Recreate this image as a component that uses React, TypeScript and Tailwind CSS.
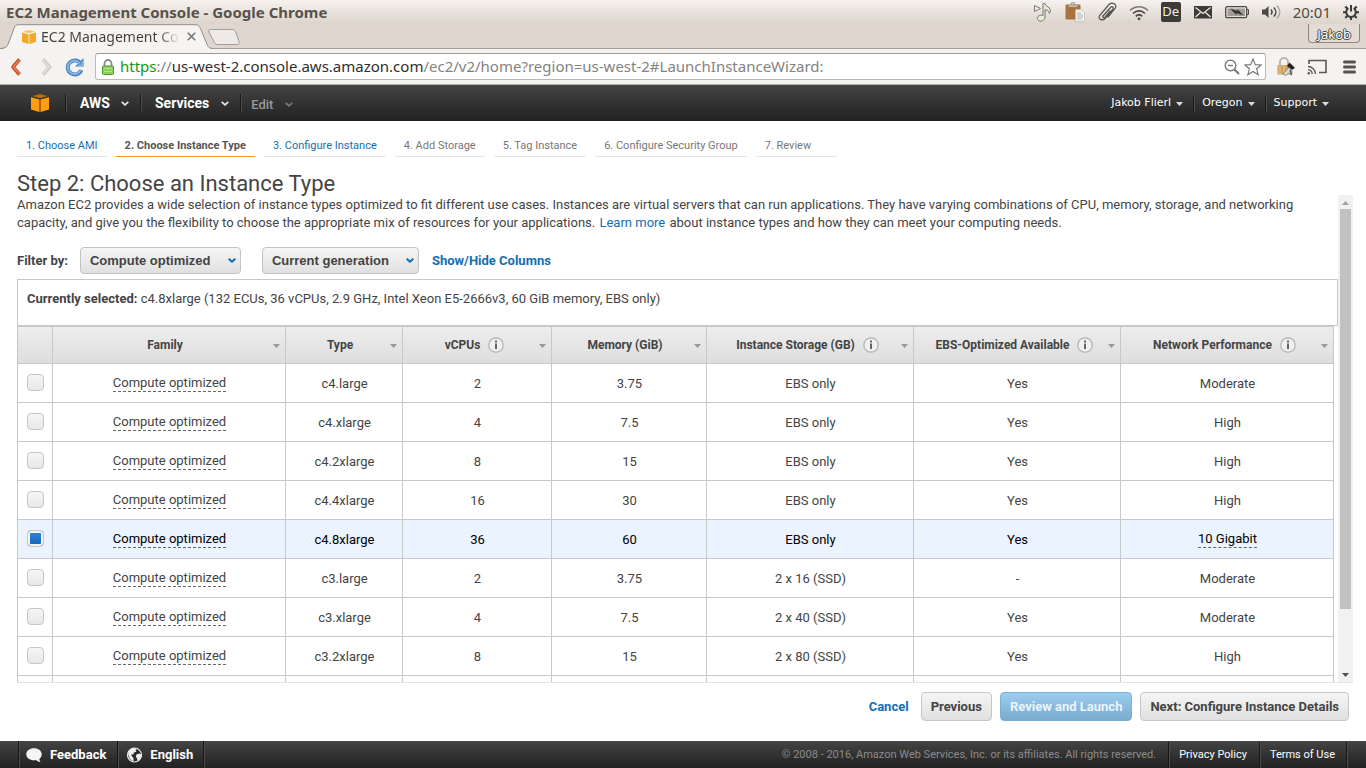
import React, { useState } from "react";

const SYSTEM_FONT = "font-['Noto_Sans','Open_Sans',sans-serif]";

type Row = {
  family: string;
  type: string;
  vcpus: string;
  memory: string;
  storage: string;
  ebs: string;
  network: string;
};

const family = "Compute optimized";
const ROWS: Row[] = [
  { family, type: "c4.large", vcpus: "2", memory: "3.75", storage: "EBS only", ebs: "Yes", network: "Moderate" },
  { family, type: "c4.xlarge", vcpus: "4", memory: "7.5", storage: "EBS only", ebs: "Yes", network: "High" },
  { family, type: "c4.2xlarge", vcpus: "8", memory: "15", storage: "EBS only", ebs: "Yes", network: "High" },
  { family, type: "c4.4xlarge", vcpus: "16", memory: "30", storage: "EBS only", ebs: "Yes", network: "High" },
  { family, type: "c4.8xlarge", vcpus: "36", memory: "60", storage: "EBS only", ebs: "Yes", network: "10 Gigabit" },
  { family, type: "c3.large", vcpus: "2", memory: "3.75", storage: "2 x 16 (SSD)", ebs: "-", network: "Moderate" },
  { family, type: "c3.xlarge", vcpus: "4", memory: "7.5", storage: "2 x 40 (SSD)", ebs: "Yes", network: "Moderate" },
  { family, type: "c3.2xlarge", vcpus: "8", memory: "15", storage: "2 x 80 (SSD)", ebs: "Yes", network: "High" },
];

const COLUMNS: { label: string; info?: boolean; width: string }[] = [
  { label: "Family", width: "w-[233px]" },
  { label: "Type", width: "w-[117px]" },
  { label: "vCPUs", info: true, width: "w-[149px]" },
  { label: "Memory (GiB)", width: "w-[155px]" },
  { label: "Instance Storage (GB)", info: true, width: "w-[207px]" },
  { label: "EBS-Optimized Available", info: true, width: "w-[207px]" },
  { label: "Network Performance", info: true, width: "w-[213px]" },
];

function Cube({ className, color, dark }: { className: string; color: string; dark: string }) {
  return (
    <svg className={className} viewBox="0 0 18 18" aria-hidden="true">
      <path d="M9 0 16.5 2 9 4.2 1.5 2Z" fill={dark} />
      <path d="M0 3.2 8.4 5.6V18L0 15.4ZM18 3.2 9.6 5.6V18L18 15.4Z" fill={color} />
      <path d="M8.4 5.6V18M9.6 5.6V18" stroke={dark} strokeWidth="0.6" />
    </svg>
  );
}

function TitleBar() {
  return (
    <header className={`flex h-6 shrink-0 items-center justify-between bg-gradient-to-b from-[#f6f2ef] to-[#dcd4cc] pr-[7px] pl-[6px] ${SYSTEM_FONT}`}>
      <h1 className="text-[15px] leading-5 font-bold text-[#57524b]">EC2 Management Console - Google Chrome</h1>
      <div className="flex items-center gap-3 text-[#4a4945]">
        <svg className="h-5 w-5" viewBox="0 0 20 20" fill="#e4ecd6" stroke="#77786a" strokeWidth="1">
          <path d="M1.5 3.500v6l6-3Z" fill="#eeeeea" />
          <path d="M10 1.500h1.800c.3 2.800 5.700 3.500 5.700 7.200 0 1.200-.5 2.200-1.200 2.800.2-2.500-1.800-3.500-4.300-3.800V15c0 5-7.500 5.500-7.500 1.300 0-2.800 3-3.800 5.500-2.800Z" />
        </svg>
        <svg className="h-5 w-5" viewBox="0 0 20 20">
          <rect x="0.500" y="2.500" width="15" height="15" rx="1" fill="#a9733f" />
          <path d="M3.500 3h9v2h-9ZM6.500.5h3v2.500h-3Z" fill="#d4cfc5" stroke="#8b8578" strokeWidth="0.600" />
          <path d="M10.500 7.500h6l3 3v9h-9Z" fill="#f4f4f2" stroke="#b9b9b5" strokeWidth="0.700" />
          <path d="M12 11h4M12 13h6M12 15h6M12 17h5" stroke="#b3b3b3" />
        </svg>
        <svg className="h-5 w-5" viewBox="0 0 20 20" fill="none" stroke="#55534e" strokeWidth="1.200" strokeLinecap="round">
          <path d="M6 14 13.500 5.500c1.600-1.700 3.700 0 2.200 1.800L8 16.500c-2.500 3-8 .5-5-3.500L11.500 3c3.500-4 9.500-.5 6.500 3.500L11 15" />
          <path d="M6 14c-.8 1.500.8 2.500 2 1.200L13 9" />
        </svg>
        <svg className="h-5 w-5" viewBox="0 0 20 20" fill="none" stroke="currentColor" strokeWidth="1.700">
          <path d="M1 8.500c5-5 13-5 18 0" stroke="#7d7973" />
          <path d="M4 11.500c3.500-3.500 8.500-3.500 12 0M6.800 14.300c2-2 4.400-2 6.400 0" />
          <circle cx="10" cy="16.800" r="1.400" fill="currentColor" stroke="none" />
        </svg>
        <span className="flex h-5 w-5 items-center justify-center rounded-[2px] bg-[#3c3b37] text-[13px] text-[#f2eee9]">De</span>
        <svg className="h-5 w-5" viewBox="0 0 20 20">
          <rect x="1" y="4" width="18" height="12.500" fill="#3c3b37" />
          <path d="m2.500 5.500 7.500 6 7.500-6M2.500 15 7.500 10.500M17.500 15 12.500 10.500" fill="none" stroke="#efeae6" strokeWidth="1.200" />
        </svg>
        <svg className="h-5 w-6" viewBox="0 0 24 20">
          <rect x="0.700" y="4.700" width="21" height="11" rx="1.500" fill="none" stroke="#4a4945" strokeWidth="1.300" />
          <rect x="2.500" y="6.500" width="17.500" height="7.500" fill="#a09d97" />
          <path d="M22 7.500h1.500v5H22" fill="none" stroke="#4a4945" />
          <path d="m5 6.500 7.500 2.500V7l6 6.500-7-2.500v2Z" fill="#33322f" />
        </svg>
        <svg className="h-5 w-5" viewBox="0 0 20 20" fill="none" stroke="currentColor" strokeWidth="1.500">
          <path d="M1 7.500h3l3.500-3.500v12L4 12.500H1Z" fill="currentColor" stroke="none" />
          <path d="M10 7.500c1.300 1.600 1.300 3.400 0 5M12.800 5.500c2.700 2.700 2.700 6.300 0 9" />
          <path d="M15.800 3.500c4 4 4 9 0 13" stroke="#aaa59f" />
        </svg>
        <span className="text-[15px] leading-5 text-[#4f4b45]">20:01</span>
        <svg className="h-4 w-4" viewBox="0 0 16 16" fill="none" stroke="#3c3b37" strokeWidth="2">
          <path d="M5.300 4.200a4.800 4.800 0 1 0 5.400 0" />
          <path d="M8 1v6.500" />
          <path d="M0 8.200h3M13 8.200h3M2.300 2.500l2 2M13.700 2.500l-2 2M2.300 14l2-2M13.700 14l-2-2M8 13v3" />
        </svg>
      </div>
    </header>
  );
}

function TabStrip() {
  return (
    <div className={`flex h-[25px] shrink-0 items-start justify-between bg-[#dfd6d0] shadow-[inset_0_-1px_0_#a59d96] pr-[6px] ${SYSTEM_FONT}`}>
      <div className="flex">
        <div className="relative h-[25px] w-[213px]">
          <svg className="absolute inset-0 h-full w-full" viewBox="0 0 213 25" aria-hidden="true">
            <path d="M0 25C6 24.500 7 23 8.500 19L14 4.500C15 1.500 16 .7 19 .7H195C198 .7 199 1.500 200.500 4.500L206.500 19C208 23.500 209 24.500 213 25Z" fill="#f6f4f2" />
            <path d="M0 24.500C6 24 7 23 8.500 19L14 4.500C15 1.500 16 .7 19 .7H195C198 .7 199 1.500 200.500 4.500L206.500 19C208 23.500 209 24 213 24.500" fill="none" stroke="#948c86" />
          </svg>
          <div className="relative flex h-[25px] items-center pl-[22px]">
            <Cube className="h-[14px] w-[14px]" color="#f0a929" dark="#f7c45e" />
            <span className="ml-[5px] w-[139px] overflow-hidden bg-gradient-to-r from-[#403e3b] from-[84%] to-transparent bg-clip-text text-[14px] whitespace-nowrap text-transparent">
              EC2 Management Console
            </span>
            <button type="button" aria-label="Close tab" className="ml-[7px]">
              <svg className="h-[9px] w-[9px]" viewBox="0 0 9 9" stroke="#77736f" strokeWidth="1.600">
                <path d="m.8.8 7.400 7.400M8.200.8.800 8.200" />
              </svg>
            </button>
          </div>
        </div>
        <button type="button" aria-label="New tab" className="-ml-[5px] mt-[5px] h-4">
          <svg className="h-4 w-8" viewBox="0 0 32 16">
            <path d="M3 .5H24c2 0 3 .7 3.800 2.500L31 12.500c.5 2-.3 3-2 3H10c-2 0-3-.7-3.800-2.500L.8 3C.2 1.300 1 .5 3 .5Z" fill="#eeeae7" stroke="#a39b95" />
          </svg>
        </button>
      </div>
      <button
        type="button"
        className="h-[19px] rounded-b-[4px] border border-t-0 border-[#8f8780] bg-[#e3dbd5] px-[8px] pt-[2px] text-[13px] leading-4 text-white [text-shadow:1px_0_0_#4a4540,-1px_0_0_#4a4540,0_1px_0_#4a4540,0_-1px_0_#4a4540]"
      >
        Jakob
      </button>
    </div>
  );
}

function Toolbar() {
  return (
    <div className={`flex h-9 shrink-0 items-center border-b border-[#b5b1ad] bg-[#f5f3f1] pr-[10px] pl-[10px] ${SYSTEM_FONT}`}>
      <button type="button" aria-label="Back" className="mr-[19px]">
        <svg className="h-5 w-3" viewBox="0 0 12 20" fill="none">
          <path d="M9.500 2.500 3 10l6.500 7.500" stroke="#c9411a" strokeWidth="3.600" strokeLinejoin="round" />
          <path d="M9.500 3 3.300 10l6.200 7" stroke="#ee7d4c" strokeWidth="1.800" />
        </svg>
      </button>
      <button type="button" aria-label="Forward" className="mr-3">
        <svg className="h-5 w-3" viewBox="0 0 12 20" fill="none">
          <path d="m2 2.500 6.500 7.500L2 17.500" stroke="#c8c5c1" strokeWidth="3.600" />
          <path d="m2 3 6.200 7L2 17" stroke="#dedbd8" strokeWidth="2" />
        </svg>
      </button>
      <button type="button" aria-label="Reload" className="mr-[10px]">
        <svg className="h-5 w-5" viewBox="0 0 20 20" fill="none">
          <path d="M15.500 6.500A7 7 0 1 0 16.300 13" stroke="#4d83bd" strokeWidth="4" />
          <path d="M18.500 1v8.500H10Z" fill="#4d83bd" />
          <path d="M15 6.500A6.700 6.700 0 1 0 15.700 13M17.500 4v4.500H13" stroke="#83b3e2" strokeWidth="2" />
        </svg>
      </button>
      <label className="flex h-[27px] min-w-0 flex-1 items-center rounded-[3px] border border-[#bdb9b5] border-t-[#9d9995] bg-white pr-[3px] pl-[6px]">
        <svg className="mr-[6px] h-4 w-3" viewBox="0 0 12 16">
          <path d="M2.500 8V4.500a3.500 3.500 0 0 1 7 0V8" fill="none" stroke="#8a8a88" strokeWidth="1.800" />
          <rect x="0.500" y="7" width="11" height="8.500" rx="1" fill="#8fd05a" stroke="#4f9a2d" />
          <path d="M2 9.500h8M2 12.500h8" stroke="#b0e488" />
        </svg>
        <span className="min-w-0 flex-1 overflow-hidden text-[15px] whitespace-nowrap text-[#85827f]">
          <span className="text-[#0f9a0f]">https</span>://<span className="text-[#2f2e2c]">us-west-2.console.aws.amazon.com</span>/ec2/v2/home?region=us-west-2#LaunchInstanceWizard:
        </span>
        <svg className="h-4 w-4" viewBox="0 0 16 16" fill="none" stroke="#76726f" strokeWidth="1.300">
          <circle cx="6.500" cy="6.500" r="5.300" />
          <path d="M4 6.500h5" />
          <path d="m10.500 10.500 4.500 4.500" strokeWidth="2" />
        </svg>
        <svg className="ml-1 h-[18px] w-[18px]" viewBox="0 0 18 18" fill="none" stroke="#76726f" strokeWidth="1.100">
          <path d="m9 .9 2.300 5.700 5.900.3-4.600 3.900 1.600 6L9 13.500 3.800 16.800l1.600-6L.8 6.900l5.900-.3Z" />
        </svg>
      </label>
      <svg className="ml-[11px] h-5 w-[18px]" viewBox="0 0 18 20">
        <path d="M3 9V5a4 4 0 0 1 8 0v4" fill="none" stroke="#b9b7b3" strokeWidth="2" />
        <path d="M.5 8h12v9.500H.5Z" fill="#cfa35e" />
        <path d="M3 8v9.500M7 8v9.500" stroke="#e0bf87" strokeWidth="1.500" />
        <path d="M12.500 5.500 18 11l-3.500 2-4.500-4Z" fill="#22211f" />
        <path d="m6 17 6-6.500 3 3-.500 4.500-3-2-2.500 2.500Z" fill="#deddda" stroke="#6b6966" strokeWidth="0.700" />
        <path d="m13 13 1.500 5" stroke="#4b4946" strokeWidth="1.300" />
      </svg>
      <svg className="ml-3 h-4 w-5" viewBox="0 0 20 16" fill="none" stroke="#5a5754" strokeWidth="1.600">
        <path d="M2 5V1.500h17v12h-7" />
        <path d="M1 7.500c4 0 7.500 3.500 7.500 7.500M1 10.800c2.500 0 4.200 1.700 4.200 4.200" strokeWidth="1.300" />
        <circle cx="1.700" cy="14.200" r="1.200" fill="#5a5754" stroke="none" />
      </svg>
      <button type="button" aria-label="Menu" className="ml-4">
        <svg className="h-[14px] w-[13px]" viewBox="0 0 13 14" stroke="#555250" strokeWidth="3" strokeLinecap="round">
          <path d="M1.500 2h10M1.500 7h10M1.500 12h10" />
        </svg>
      </button>
    </div>
  );
}

function NavChevron({ color }: { color: string }) {
  return (
    <svg className="h-[5px] w-2" viewBox="0 0 8 5" fill="none" stroke={color} strokeWidth="1.800">
      <path d="m.7.8 3.300 3 3.300-3" />
    </svg>
  );
}

function NavBar() {
  return (
    <nav className="flex h-9 shrink-0 items-center justify-between bg-gradient-to-b from-[#444444] to-[#222222] text-white">
      <div className="flex items-center">
        <a href="#home" aria-label="AWS home" className="mr-4 ml-[31px]">
          <Cube className="h-[18px] w-[18px]" color="#ff9d0b" dark="#b86f05" />
        </a>
        <button type="button" className="flex h-[18px] items-center gap-[11px] border-l border-[#191919] pr-[11px] pl-[14px] text-[14px] font-bold shadow-[inset_1px_0_0_#4b4b4b]">
          AWS <NavChevron color="#e5e5e5" />
        </button>
        <button type="button" className="flex h-[18px] items-center gap-3 border-l border-[#191919] pr-[11px] pl-[14px] text-[14px] font-bold shadow-[inset_1px_0_0_#4b4b4b]">
          Services <NavChevron color="#e5e5e5" />
        </button>
        <button type="button" className="flex h-[18px] items-center gap-3 border-l border-[#191919] pt-[3px] pl-[10px] text-[13px] font-medium text-[#999999] shadow-[inset_1px_0_0_#4b4b4b]">
          Edit <NavChevron color="#777777" />
        </button>
      </div>
      <div className="flex items-center pr-[27px] pt-px font-['DejaVu_Sans','Verdana',sans-serif] text-[11px]">
        {["Jakob Flierl", "Oregon", "Support"].map((name, i) => (
          <button
            key={name}
            type="button"
            className={`flex h-[18px] items-center gap-[5px] pr-[10px] pl-2 ${i > 0 ? "border-l border-[#191919] shadow-[inset_1px_0_0_#4b4b4b]" : ""}`}
          >
            {name}
            <svg className="h-1 w-[7px]" viewBox="0 0 7 4">
              <path d="M0 0h7L3.500 4Z" fill="#dddddd" />
            </svg>
          </button>
        ))}
      </div>
    </nav>
  );
}

const STEPS = [
  { label: "1. Choose AMI", link: true },
  { label: "2. Choose Instance Type", current: true },
  { label: "3. Configure Instance", link: true },
  { label: "4. Add Storage" },
  { label: "5. Tag Instance" },
  { label: "6. Configure Security Group" },
  { label: "7. Review" },
];

function Steps() {
  return (
    <ol className="flex gap-[9px] pt-4 text-[11px] leading-[18px]">
      {STEPS.map((s) => (
        <li
          key={s.label}
          className={`min-w-[81px] border-b px-[9px] pb-px ${s.current ? "border-[#f7931e] font-bold text-[#555555]" : "border-[#e5e5e5] text-[#777777]"}`}
        >
          {s.link ? <a href="#step" className="text-[#146eb4]">{s.label}</a> : s.label}
        </li>
      ))}
    </ol>
  );
}

function Filter({ id, options, className }: { id: string; options: string[]; className: string }) {
  return (
    <div className="relative flex items-center">
      <select
        id={id}
        aria-label={options[0]}
        className={`h-[27px] appearance-none rounded-[4px] border border-[#c3c3c3] bg-gradient-to-b from-[#f5f5f5] to-[#e0e0e0] pl-[9px] font-['Liberation_Sans',Arial,sans-serif] text-[13px] font-bold text-[#444444] ${className}`}
      >
        {options.map((o) => (
          <option key={o}>{o}</option>
        ))}
      </select>
      <svg className="pointer-events-none absolute right-[5px] h-[5px] w-2" viewBox="0 0 8 5" fill="none" stroke="#146eb4" strokeWidth="2">
        <path d="m.7.7 3.300 3 3.300-3" />
      </svg>
    </div>
  );
}

function InfoIcon() {
  return (
    <svg className="h-4 w-4" viewBox="0 0 16 16" aria-hidden="true">
      <circle cx="8" cy="8" r="7.200" fill="#f0f0f0" stroke="#b0b0b0" strokeWidth="1.200" />
      <path d="M8 3.500v2M8 6.500v5.500" stroke="#666666" strokeWidth="2" />
    </svg>
  );
}

function InstanceTable() {
  const [selected, setSelected] = useState("c4.8xlarge");
  const edge = "border-r border-b border-[#c8c8c8]";
  const cell = `${edge} pt-[2px] pr-0 pb-0 pl-px text-center`;
  const dashed = "block w-fit mx-auto -mt-[2px] border-b border-dashed border-[#666666] leading-4";
  return (
    <div className="pr-1">
      <table className="w-full table-fixed border-separate border-spacing-0 text-[13px]">
        <thead>
          <tr className="h-[38px] bg-gradient-to-b from-[#eeeeee] to-[#dddddd]">
            <th className={`w-9 border-t border-l ${edge}`} aria-label="Select" />
            {COLUMNS.map((c) => (
              <th key={c.label} className={`border-t p-0 ${c.width} ${edge}`}>
                <div className={`flex items-center pr-[5px] ${c.info ? "pl-[7px]" : "pl-1"}`}>
                  <span className="flex flex-1 items-center justify-center gap-2 text-[12px] font-bold text-[#444444]">
                    {c.label}
                    {c.info && <InfoIcon />}
                  </span>
                  <svg className="mt-px h-1 w-[7px]" viewBox="0 0 7 4">
                    <path d="M0 0h7L3.500 4Z" fill="#999999" />
                  </svg>
                </div>
              </th>
            ))}
          </tr>
        </thead>
        <tbody>
          {ROWS.map((r) => {
            const on = r.type === selected;
            return (
              <tr key={r.type} className={`h-[39px] ${on ? "bg-[#eaf3fe] text-black" : "text-[#444444]"}`}>
                <td className={`border-l p-0 pb-[2px] ${edge}`}>
                  <input
                    type="checkbox"
                    aria-label={r.type}
                    checked={on}
                    onChange={() => setSelected(r.type)}
                    className="mx-auto block h-[17px] w-[17px] appearance-none rounded-[4px] border border-[#c6c6c6] bg-gradient-to-b from-[#f5f5f5] to-[#e8e8e8] checked:from-[#2f86dc] checked:to-[#1463b8] checked:shadow-[inset_0_0_0_2px_#f4f4f4]"
                  />
                </td>
                <td className={cell}>
                  <span className={dashed}>{r.family}</span>
                </td>
                <td className={cell}>{r.type}</td>
                <td className={cell}>{r.vcpus}</td>
                <td className={cell}>{r.memory}</td>
                <td className={cell}>{r.storage}</td>
                <td className={cell}>{r.ebs}</td>
                <td className={cell}>
                  {r.network === "10 Gigabit" ? <span className={dashed}>{r.network}</span> : r.network}
                </td>
              </tr>
            );
          })}
          <tr className="h-[39px]" aria-hidden="true">
            <td className={`border-l ${edge}`} />
            {COLUMNS.map((c) => (
              <td key={c.label} className={edge} />
            ))}
          </tr>
        </tbody>
      </table>
    </div>
  );
}

function ScrollTrack() {
  return (
    <div className="flex w-[15px] shrink-0 flex-col items-center bg-[#f1f1f1]" aria-hidden="true">
      <svg className="h-[14px] w-[7px] shrink-0" viewBox="0 0 7 14">
        <path d="M0 10h7L3.500 6Z" fill="#a0a0a0" />
      </svg>
      <div className="w-[11px] grow-[400] bg-[#c1c1c1]" />
      <div className="grow-[59]" />
      <svg className="h-[14px] w-[7px] shrink-0" viewBox="0 0 7 14">
        <path d="M0 5h7L3.500 9Z" fill="#505050" />
      </svg>
    </div>
  );
}

function Footer() {
  const sep = "border-l border-[#171717] shadow-[inset_1px_0_0_#4b4b4b]";
  return (
    <footer className="flex h-[27px] shrink-0 items-stretch justify-between bg-gradient-to-b from-[#444444] to-[#222222] px-[18px] text-[11px] text-white">
      <div className="flex text-[13px] font-bold">
        <button type="button" className={`flex items-center gap-2 pr-[11px] pl-[7px] ${sep}`}>
          <svg className="h-4 w-4" viewBox="0 0 16 16">
            <path d="M8 1.200c4.400 0 7.700 2.600 7.700 6 0 2-.9 3.600-2.400 4.700.1 1.300.6 2.400 1.300 3.200-2-.2-3.500-1-4.400-2.100-.7.200-1.500.2-2.200.2-4.400 0-7.700-2.600-7.700-6s3.300-6 7.700-6Z" fill="#f4f4f4" />
          </svg>
          Feedback
        </button>
        <button type="button" className={`flex items-center gap-2 pr-[10px] pl-2 ${sep}`}>
          <svg className="h-4 w-4" viewBox="0 0 16 16">
            <circle cx="8.500" cy="8" r="7" fill="#2b2b2b" stroke="#f0f0f0" strokeWidth="1.200" />
            <path d="M3 3.500 7 1l4 .8-1.500 1.500 1 1.500-2.500.8-.8 2L5 7.500l1 2L7.500 11v3.500L4 12 2 7ZM10.500 7.500l3-1L15.500 8l-1 3.500-2.700 2.500-1-3-1-1.500Z" fill="#f0f0f0" />
          </svg>
          English
        </button>
        <div className={`w-[2px] ${sep}`} />
      </div>
      <div className="flex items-center pt-px">
        <span className="pr-3 text-[#8b8b8b]">© 2008 - 2016, Amazon Web Services, Inc. or its affiliates. All rights reserved.</span>
        <a href="#privacy" className={`flex items-center self-stretch pr-3 pl-[10px] ${sep}`}>Privacy Policy</a>
        <a href="#terms" className={`flex items-center self-stretch pr-[11px] pl-[10px] ${sep}`}>Terms of Use</a>
        <div className={`w-[2px] self-stretch ${sep}`} />
      </div>
    </footer>
  );
}

export default function App() {
  const button = "h-[29px] rounded-[4px] border px-[9px] text-[13px] font-bold";
  return (
    <div className="flex h-screen flex-col overflow-hidden bg-white font-['Roboto','Liberation_Sans',sans-serif] text-[13px] text-[#444444]">
      <TitleBar />
      <TabStrip />
      <Toolbar />
      <NavBar />
      <main className="flex min-h-0 flex-1 flex-col pr-[13px] pl-[17px]">
        <Steps />
        <h2 className="pt-4 text-[22px] leading-[22px]">Step 2: Choose an Instance Type</h2>
        <section className="flex min-h-0 flex-1 border-b border-[#e5e5e5]">
          <div className="min-w-0 flex-1 overflow-hidden">
            <p className="pt-px pr-[30px] leading-[18px]">
              Amazon EC2 provides a wide selection of instance types optimized to fit different use cases. Instances are virtual servers that can run applications. They have varying combinations of CPU, memory, storage, and networking capacity, and give you the flexibility to choose the appropriate mix of resources for your applications.{" "}
              <a href="#learn" className="mx-px text-[#146eb4]">Learn more</a> about instance types and how they can meet your computing needs.
            </p>
            <div className="flex items-center pt-[15px] font-bold">
              <label htmlFor="family" className="mr-3">Filter by:</label>
              <Filter id="family" options={["Compute optimized", "All instance types"]} className="w-[161px]" />
              <div className="ml-[21px]">
                <Filter id="generation" options={["Current generation", "All generations"]} className="w-[157px]" />
              </div>
              <a href="#columns" className="ml-[13px] text-[#146eb4]">Show/Hide Columns</a>
            </div>
            <div className="mt-[5px] h-[47px] border border-[#c8c8c8] px-[9px] pt-[10px] leading-[18px]">
              <b>Currently selected:</b> c4.8xlarge (132 ECUs, 36 vCPUs, 2.9 GHz, Intel Xeon E5-2666v3, 60 GiB memory, EBS only)
            </div>
            <InstanceTable />
          </div>
          <ScrollTrack />
        </section>
        <div className="flex shrink-0 items-center justify-end gap-2 pt-[9px] pr-1 pb-5">
          <a href="#cancel" className="mr-1 font-bold text-[#146eb4]">Cancel</a>
          <button type="button" className={`${button} border-[#c6c6c6] bg-gradient-to-b from-[#f5f5f5] to-[#e0e0e0]`}>Previous</button>
          <button type="button" className={`${button} border-[#7fafd3] bg-gradient-to-b from-[#9cccee] to-[#7aabd0] text-[#e9f4fc]`}>Review and Launch</button>
          <button type="button" className={`${button} border-[#c6c6c6] bg-gradient-to-b from-[#f5f5f5] to-[#e0e0e0]`}>Next: Configure Instance Details</button>
        </div>
      </main>
      <Footer />
    </div>
  );
}
